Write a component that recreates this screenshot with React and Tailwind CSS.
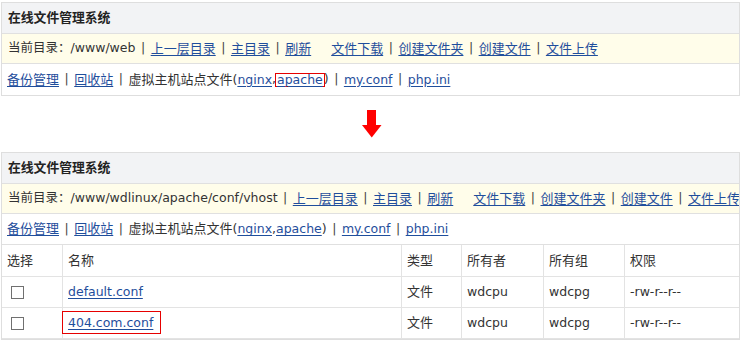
import React from 'react';

const Sep = () => <span className="mx-[5.5px] text-[#444] text-[12.5px]">|</span>;

const A = ({ children, className = '' }) => (
    <a href="#" className={`text-[#1f4e9c] underline underline-offset-2 ${className}`}>{children}</a>
);

// latin text runs a touch smaller than the CJK ones in the reference
const L = ({ children }) => <span className="text-[12.5px]">{children}</span>;

const PathBar = ({ path }) => (
    <div className="h-[30px] flex items-center pl-[6px] bg-[#fffdea] border-b border-[#e0e0e0] whitespace-nowrap overflow-hidden">
        <span className="text-[#333] text-[12.5px]">当前目录：{path}</span>
        <Sep />
        <A>上一层目录</A>
        <Sep />
        <A>主目录</A>
        <Sep />
        <A>刷新</A>
        <A className="ml-[20px]">文件下载</A>
        <Sep />
        <A>创建文件夹</A>
        <Sep />
        <A>创建文件</A>
        <Sep />
        <A>文件上传</A>
    </div>
);

const LinkBar = ({ boxed, last }) => (
    <div className={`h-[31px] flex items-center pl-[5px] whitespace-nowrap ${last ? '' : 'border-b border-[#e0e0e0]'}`}>
        <A>备份管理</A>
        <Sep />
        <A>回收站</A>
        <Sep />
        <span className="text-[#333]">虚拟主机站点文件<L>(</L></span>
        <A><L>nginx</L></A>
        <L>,</L>
        {boxed ? (
            <span className="inline-block border border-[#e60000] leading-[12px] px-px -mx-px">
                <A><L>apache</L></A>
            </span>
        ) : (
            <A><L>apache</L></A>
        )}
        <L>)</L>
        <Sep />
        <A><L>my.conf</L></A>
        <Sep />
        <A><L>php.ini</L></A>
    </div>
);

const Header = () => (
    <div className="h-[31px] flex items-center pl-[6px] bg-[#f2f3f5] border-b border-[#e0e0e0] font-bold text-[12.8px] text-[#222]">
        在线文件管理系统
    </div>
);

const files = [
    { name: 'default.conf', boxed: false },
    { name: '404.com.conf', boxed: true },
];

const cols = 'grid grid-cols-[61px_339px_60px_82px_81px_1fr]';
const cell = 'flex items-center pl-[5px] border-r border-[#e3e3e3]';

const App = () => {
    return (
        <div className="w-[743px] h-[342px] bg-white overflow-hidden pt-[2px] text-[13px] text-[#333] font-['DejaVu_Sans','Noto_Sans_CJK_SC',sans-serif]">
            {/* before */}
            <div className="ml-px w-[739px] border border-[#dedede]">
                <Header />
                <PathBar path="/www/web" />
                <LinkBar boxed last />
            </div>

            {/* arrow */}
            <div className="h-[56px] flex items-center justify-center">
                <svg width="20" height="28" viewBox="0 0 20 28">
                    <rect x="5" y="0" width="9" height="16" fill="#f00" />
                    <polygon points="0,15 19.5,15 9.75,27.5" fill="#f00" />
                </svg>
            </div>

            {/* after */}
            <div className="ml-px w-[739px] border border-[#dedede]">
                <Header />
                <PathBar path="/www/wdlinux/apache/conf/vhost" />
                <LinkBar />
                <div className={`${cols} h-[32px] border-b border-[#e3e3e3]`}>
                    <div className={cell}>选择</div>
                    <div className={cell}>名称</div>
                    <div className={cell}>类型</div>
                    <div className={cell}>所有者</div>
                    <div className={cell}>所有组</div>
                    <div className="flex items-center pl-[5px]">权限</div>
                </div>
                {files.map((f) => (
                    <div key={f.name} className={`${cols} h-[31px] border-b border-[#e3e3e3]`}>
                        <div className={`${cell} pl-[9px]`}>
                            <span className="w-[13px] h-[13px] border border-[#707070] bg-white" />
                        </div>
                        <div className={`${cell} relative`}>
                            <A><L>{f.name}</L></A>
                            {f.boxed && (
                                <span className="absolute left-[-1px] top-[3px] w-[99px] h-[23px] border border-[#e60000]" />
                            )}
                        </div>
                        <div className={cell}>文件</div>
                        <div className={cell}><L>wdcpu</L></div>
                        <div className={cell}><L>wdcpg</L></div>
                        <div className="flex items-center pl-[5px]"><L>-rw-r--r--</L></div>
                    </div>
                ))}
            </div>
        </div>
    );
};

export default App;
